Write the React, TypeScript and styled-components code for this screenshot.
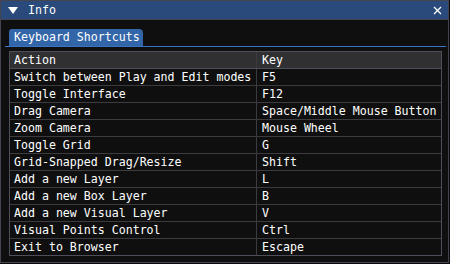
import React from 'react'
import styled, { createGlobalStyle } from 'styled-components'

const GlobalStyle = createGlobalStyle`
  body {
    margin: 0;
    background: #0a0a0a;
    font-family: "DejaVu Sans Mono", "Liberation Mono", monospace;
    font-size: 11.6px;
    color: #ffffff;
  }
  * { box-sizing: border-box; }
`

const Window = styled.div`
  width: 449px;
  height: 263px;
  border: 1px solid #45454f;
  background: #0f0f0f;
  display: flex;
  flex-direction: column;
`

const TitleBar = styled.div`
  height: 19px;
  background: #294a7a;
  border-bottom: 1px solid #45454f;
  display: flex;
  align-items: center;
  padding: 0 0 0 7px;
`

const Title = styled.span`
  flex: 1;
  margin-left: 10px;
  line-height: 18px;
`

const CloseButton = styled.div`
  width: 20px;
  height: 18px;
  display: flex;
  align-items: center;
  justify-content: center;
  margin-right: 1px;
`

const Content = styled.div`
  padding: 9px 6px 0 8px;
  display: flex;
  flex-direction: column;
`

const TabBar = styled.div`
  display: flex;
  margin: 0 -4px;
  padding: 0 4px;
  border-bottom: 1px solid #3a72c4;
`

const Tab = styled.div<{ active?: boolean }>`
  height: 17px;
  padding: 0 3px 0 5px;
  background: ${p => (p.active ? '#3366a8' : '#1f3a60')};
  border-radius: 3px 4px 0 0;
  line-height: 16px;
`

const Table = styled.div`
  margin-top: 4px;
  width: 433px;
  border: 1px solid #4f4f59;
  border-bottom-width: 0;
`

const Row = styled.div<{ header?: boolean }>`
  display: grid;
  grid-template-columns: 246px 1fr;
  height: 17px;
  border-bottom: 1px solid ${p => (p.header ? '#4f4f59' : '#3b3b40')};
  background: ${p => (p.header ? '#303033' : 'transparent')};
  &:last-child {
    border-bottom-color: #4f4f59;
  }
`

const Cell = styled.div<{ divider?: boolean }>`
  padding-left: ${p => (p.divider ? '5px' : '4px')};
  line-height: 16px;
  white-space: nowrap;
  overflow: hidden;
  border-left: ${p => (p.divider ? '1px solid #3b3b40' : 'none')};
`

const shortcuts: [string, string][] = [
  ['Switch between Play and Edit modes', 'F5'],
  ['Toggle Interface', 'F12'],
  ['Drag Camera', 'Space/Middle Mouse Button'],
  ['Zoom Camera', 'Mouse Wheel'],
  ['Toggle Grid', 'G'],
  ['Grid-Snapped Drag/Resize', 'Shift'],
  ['Add a new Layer', 'L'],
  ['Add a new Box Layer', 'B'],
  ['Add a new Visual Layer', 'V'],
  ['Visual Points Control', 'Ctrl'],
  ['Exit to Browser', 'Escape'],
]

function App() {
  return (
    <>
      <GlobalStyle />
      <Window>
        <TitleBar>
          <svg width="10" height="9" viewBox="0 0 10 9">
            <polygon points="0,1 10,1 5,8" fill="#ffffff" />
          </svg>
          <Title>Info</Title>
          <CloseButton>
            <svg width="9" height="9" viewBox="0 0 9 9">
              <path d="M1 1 L8 8 M8 1 L1 8" stroke="#ffffff" strokeWidth="1.3" />
            </svg>
          </CloseButton>
        </TitleBar>
        <Content>
          <TabBar>
            <Tab active>Keyboard Shortcuts</Tab>
          </TabBar>
          <Table>
            <Row header>
              <Cell>Action</Cell>
              <Cell divider>Key</Cell>
            </Row>
            {shortcuts.map(([action, key]) => (
              <Row key={action}>
                <Cell>{action}</Cell>
                <Cell divider>{key}</Cell>
              </Row>
            ))}
          </Table>
        </Content>
      </Window>
    </>
  )
}

export default App
